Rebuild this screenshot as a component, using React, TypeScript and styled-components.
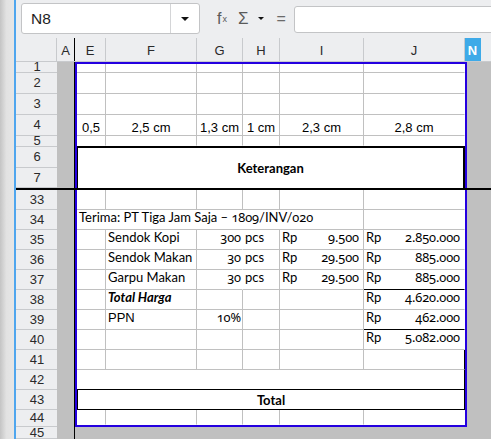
import styled, { createGlobalStyle } from 'styled-components';

const GRID = '#c0c0c0';
const PAGE = '#2400e0';
const CHROME = '#edeef0';
const OUTSIDE = '#c0c0c0';
const HEAD_LINE = '#c8cacd';
const SANS = '"Liberation Sans", Arial, sans-serif';
const CAL = 'Lato, "Open Sans", sans-serif';

const COLS = [29, 91, 46, 37, 84, 101];
const HEADERS = [
  { label: 'E', w: 31 },
  { label: 'F', w: 91 },
  { label: 'G', w: 46 },
  { label: 'H', w: 37 },
  { label: 'I', w: 84 },
  { label: 'J', w: 101 },
];

const TOP_ROWS = [
  { n: 1, h: 11 },
  { n: 2, h: 21 },
  { n: 3, h: 21 },
  { n: 4, h: 21 },
  { n: 5, h: 11 },
  { n: 6, h: 21 },
  { n: 7, h: 20 },
];

// row 45 is only partly on screen, like in the real window
const BOTTOM_ROWS = [
  ...Array.from({ length: 11 }, (_, i) => ({ n: 33 + i, h: 20 })),
  { n: 44, h: 17 },
  { n: 45, h: 12 },
];

const ITEMS = [
  { name: 'Sendok Kopi', qty: '300', price: '9.500', total: '2.850.000' },
  { name: 'Sendok Makan', qty: '30', price: '29.500', total: '885.000' },
  { name: 'Garpu Makan', qty: '30', price: '29.500', total: '885.000' },
];

type Align = 'left' | 'center' | 'right' | 'split';
type Line = 'grid' | 'none' | 'black';

const lineColor = (l: Line) => (l === 'none' ? 'transparent' : l === 'black' ? '#000' : GRID);

const GlobalStyle = createGlobalStyle`
  html, body {
    margin: 0;
    padding: 0;
  }

  body {
    width: 491px;
    height: 439px;
    overflow: hidden;
    background: ${CHROME};
    font-family: ${SANS};
    color: #000;
  }
`;

export default function App() {
  return (
    <>
      <GlobalStyle />
      <Screen>
        <SideEdge />
        <Window>
          <Toolbar>
            <NameBox>
              <NameText>N8</NameText>
              <NameDrop>
                <Caret $size={4} />
              </NameDrop>
            </NameBox>
            <FxIcon>
              f<sub>x</sub>
            </FxIcon>
            <SumIcon>Σ</SumIcon>
            <SmallCaret>
              <Caret $size={3} />
            </SmallCaret>
            <EqIcon>=</EqIcon>
            <FormulaInput />
          </Toolbar>

          <HeaderRow>
            <Corner />
            <ColHead $w={18} $freeze>
              A
            </ColHead>
            {HEADERS.map((c) => (
              <ColHead key={c.label} $w={c.w}>
                {c.label}
              </ColHead>
            ))}
            <ColHead $w={16} $selected>
              N
            </ColHead>
            <HeadFill />
          </HeaderRow>

          <Pane $h={126}>
            <RowHeads>
              {TOP_ROWS.map((r) => (
                <RowHead key={r.n} $h={r.h}>
                  {r.n}
                </RowHead>
              ))}
            </RowHeads>
            <ColA />
            <Canvas>
              <PrintArea $part="top">
                <SheetRow $h={9}>{emptyCells()}</SheetRow>
                <SheetRow $h={21}>{emptyCells()}</SheetRow>
                <SheetRow $h={21}>{emptyCells()}</SheetRow>
                <SheetRow $h={21}>
                  {['0,5', '2,5 cm', '1,3 cm', '1 cm', '2,3 cm', '2,8 cm'].map((t, i) => (
                    <Cell key={i} $align="center" $v="bottom" $last={i === 5}>
                      {t}
                    </Cell>
                  ))}
                </SheetRow>
                <SheetRow $h={10}>{emptyCells('none')}</SheetRow>
                <TitleBand>Keterangan</TitleBand>
              </PrintArea>
            </Canvas>
          </Pane>

          <FreezeLine />

          <Pane>
            <RowHeads>
              {BOTTOM_ROWS.map((r) => (
                <RowHead key={r.n} $h={r.h}>
                  {r.n}
                </RowHead>
              ))}
            </RowHeads>
            <ColA />
            <Canvas>
              <PrintArea $part="bottom">
                <SheetRow $h={20}>{emptyCells()}</SheetRow>

                <SheetRow $h={20}>
                  <Cell $span={5} $font="cal">
                    Terima: PT Tiga Jam Saja –&nbsp;<Num>1809</Num>/INV/<Num>020</Num>
                  </Cell>
                  <Cell $last />
                </SheetRow>

                {ITEMS.map((it, i) => (
                  <SheetRow key={it.name} $h={20}>
                    <Cell />
                    <Cell $font="cal">{it.name}</Cell>
                    <Cell $font="cal" $align="right" $r="none">
                      <Num>{it.qty}</Num>
                    </Cell>
                    <Cell $font="cal">pcs</Cell>
                    <Cell $font="cal" $align="split">
                      <span>Rp</span>
                      <Num>{it.price}</Num>
                    </Cell>
                    <Cell $font="cal" $align="split" $last $b={i === 2 ? 'black' : 'grid'}>
                      <span>Rp</span>
                      <Num>{it.total}</Num>
                    </Cell>
                  </SheetRow>
                ))}

                <SheetRow $h={20}>
                  <Cell />
                  <Cell $font="cal" $bold $italic>
                    Total Harga
                  </Cell>
                  <Cell />
                  <Cell />
                  <Cell />
                  <Cell $font="cal" $align="split" $last>
                    <span>Rp</span>
                    <Num>4.620.000</Num>
                  </Cell>
                </SheetRow>

                <SheetRow $h={20}>
                  <Cell />
                  <Cell>PPN</Cell>
                  <Cell $font="cal" $align="right">
                    <Num>10%</Num>
                  </Cell>
                  <Cell />
                  <Cell />
                  <Cell $font="cal" $align="split" $last $b="black">
                    <span>Rp</span>
                    <Num>462.000</Num>
                  </Cell>
                </SheetRow>

                <SheetRow $h={20}>
                  <Cell />
                  <Cell />
                  <Cell />
                  <Cell />
                  <Cell />
                  <Cell $font="cal" $align="split" $last>
                    <span>Rp</span>
                    <Num>5.082.000</Num>
                  </Cell>
                </SheetRow>

                <SheetRow $h={20}>
                  <Cell />
                  <Cell />
                  <Cell />
                  <Cell />
                  <Cell />
                  <Cell $last $r="black" />
                </SheetRow>

                <SheetRow $h={20}>
                  <Cell $span={6} $last $r="black" $b="black" />
                </SheetRow>

                <SheetRow $h={20}>
                  <TotalBand>Total</TotalBand>
                </SheetRow>

                <SheetRow $h={15}>{emptyCells('none')}</SheetRow>
              </PrintArea>
            </Canvas>
          </Pane>
        </Window>
      </Screen>
    </>
  );
}

function emptyCells(bottom: Line = 'grid') {
  return COLS.map((_, i) => <Cell key={i} $b={bottom} $last={i === COLS.length - 1} />);
}

const Screen = styled.div`
  display: flex;
  width: 491px;
  height: 439px;
  overflow: hidden;
`;

const SideEdge = styled.div`
  flex-shrink: 0;
  width: 14px;
  background: linear-gradient(to right, #c4c4c4, #e2e2e2 45%, #e6e6e6);
  border-right: 2px solid #4fa6ee;
`;

const Window = styled.div`
  flex: 1;
  min-width: 0;
  display: flex;
  flex-direction: column;
  background: ${CHROME};
`;

const Toolbar = styled.div`
  flex-shrink: 0;
  box-sizing: border-box;
  height: 38px;
  padding: 3px 0 0 5px;
  display: flex;
  align-items: flex-start;
  overflow: hidden;
`;

const NameBox = styled.div`
  box-sizing: border-box;
  width: 179px;
  height: 31px;
  display: flex;
  background: #fff;
  border: 1px solid #c3c4c6;
  border-radius: 3px;
`;

const NameText = styled.div`
  flex: 1;
  display: flex;
  align-items: center;
  padding-left: 9px;
  font-size: 15.5px;
  color: #1e1e1e;
`;

const NameDrop = styled.div`
  width: 28px;
  display: flex;
  align-items: center;
  justify-content: center;
  border-left: 1px solid #d4d5d7;
`;

const Caret = styled.span<{ $size: number }>`
  width: 0;
  height: 0;
  border-left: ${({ $size }) => $size}px solid transparent;
  border-right: ${({ $size }) => $size}px solid transparent;
  border-top: ${({ $size }) => $size}px solid #111;
`;

const ToolGlyph = styled.div`
  height: 31px;
  display: flex;
  align-items: center;
  color: #5a5a5a;
`;

const FxIcon = styled(ToolGlyph)`
  margin-left: 17px;
  font-size: 16px;

  sub {
    font-size: 9px;
    vertical-align: -3px;
    margin-left: 1px;
  }
`;

const SumIcon = styled(ToolGlyph)`
  margin-left: 11px;
  font-size: 17px;
`;

const SmallCaret = styled(ToolGlyph)`
  margin-left: 10px;
`;

const EqIcon = styled(ToolGlyph)`
  margin-left: 12px;
  font-size: 16px;
  color: #6a6a6a;
`;

const FormulaInput = styled.div`
  flex: 1;
  box-sizing: border-box;
  height: 27px;
  margin: 3px -10px 0 8px;
  background: #fff;
  border: 1px solid #c3c4c6;
  border-radius: 3px;
`;

const HeaderRow = styled.div`
  flex-shrink: 0;
  box-sizing: border-box;
  height: 24px;
  display: flex;
  border-bottom: 1px solid ${HEAD_LINE};
`;

const Corner = styled.div`
  flex-shrink: 0;
  box-sizing: border-box;
  width: 41px;
  border-right: 1px solid ${HEAD_LINE};
`;

const ColHead = styled.div<{ $w: number; $freeze?: boolean; $selected?: boolean }>`
  flex-shrink: 0;
  box-sizing: border-box;
  width: ${({ $w }) => $w}px;
  display: flex;
  align-items: center;
  justify-content: center;
  padding-top: 1px;
  font-size: 13px;
  color: ${({ $selected }) => ($selected ? '#fff' : '#2a2a2a')};
  font-weight: ${({ $selected }) => ($selected ? 700 : 400)};
  background: ${({ $selected }) => ($selected ? '#3eaae8' : 'transparent')};
  border-right: 1px solid ${({ $freeze, $selected }) => ($freeze ? '#000' : $selected ? '#3eaae8' : HEAD_LINE)};
`;

const HeadFill = styled.div`
  flex: 1;
`;

const Pane = styled.div<{ $h?: number }>`
  display: flex;
  overflow: hidden;
  ${({ $h }) => ($h ? `height: ${$h}px; flex-shrink: 0;` : 'flex: 1; min-height: 0;')}
`;

const RowHeads = styled.div`
  flex-shrink: 0;
  width: 41px;
  display: flex;
  flex-direction: column;
  background: ${CHROME};
`;

const RowHead = styled.div<{ $h: number }>`
  flex-shrink: 0;
  box-sizing: border-box;
  height: ${({ $h }) => $h}px;
  display: flex;
  align-items: center;
  justify-content: center;
  padding-left: 1px;
  font-size: 13px;
  line-height: 10px;
  color: #2a2a2a;
  border-bottom: 1px solid ${HEAD_LINE};
`;

const ColA = styled.div`
  flex-shrink: 0;
  box-sizing: border-box;
  width: 18px;
  background: ${OUTSIDE};
  border-right: 1px solid #000;
`;

const Canvas = styled.div`
  flex: 1;
  min-width: 0;
  display: flex;
  flex-direction: column;
  align-items: flex-start;
  background: ${OUTSIDE};
`;

const PrintArea = styled.div<{ $part: 'top' | 'bottom' }>`
  flex-shrink: 0;
  box-sizing: border-box;
  width: 392px;
  background: #fff;
  border: 2px solid ${PAGE};
  ${({ $part }) => ($part === 'top' ? 'border-bottom: none;' : 'border-top: none;')}
`;

const SheetRow = styled.div<{ $h: number }>`
  display: grid;
  grid-template-columns: ${COLS.map((c) => `${c}px`).join(' ')};
  height: ${({ $h }) => $h}px;
`;

const Cell = styled.div<{
  $span?: number;
  $align?: Align;
  $v?: 'top' | 'bottom' | 'center';
  $r?: Line;
  $b?: Line;
  $last?: boolean;
  $font?: 'sans' | 'cal';
  $bold?: boolean;
  $italic?: boolean;
}>`
  grid-column: span ${({ $span }) => $span ?? 1};
  box-sizing: border-box;
  min-width: 0;
  display: flex;
  white-space: nowrap;
  justify-content: ${({ $align }) =>
    $align === 'center'
      ? 'center'
      : $align === 'right'
        ? 'flex-end'
        : $align === 'split'
          ? 'space-between'
          : 'flex-start'};
  align-items: ${({ $v }) => ($v === 'bottom' ? 'flex-end' : $v === 'center' ? 'center' : 'flex-start')};
  padding: ${({ $align }) =>
    $align === 'split' ? '0 4px 0 2px' : $align === 'right' ? '0 1px 0 2px' : $align === 'center' ? '0' : '0 2px'};
  font-family: ${({ $font }) => ($font === 'cal' ? CAL : SANS)};
  font-size: 13px;
  line-height: 15px;
  font-weight: ${({ $bold }) => ($bold ? 700 : 400)};
  font-style: ${({ $italic }) => ($italic ? 'italic' : 'normal')};
  border-right: 1px solid ${({ $r, $last }) => lineColor($r ?? ($last ? 'none' : 'grid'))};
  border-bottom: 1px solid ${({ $b }) => lineColor($b ?? 'grid')};
`;

// Calibri-style old-style figures
const Num = styled.span`
  font-family: "Noto Sans", Lato, sans-serif;
  font-size: 12.8px;
  font-variant-numeric: oldstyle-nums;
  font-feature-settings: 'onum' 1;
  letter-spacing: -0.1px;
`;

const TitleBand = styled.div`
  box-sizing: border-box;
  height: 42px;
  display: flex;
  align-items: center;
  justify-content: center;
  font-family: ${CAL};
  font-size: 13px;
  font-weight: 700;
  border-top: 2px solid #000;
  border-left: 1px solid #000;
  border-right: 2px solid #000;
`;

const TotalBand = styled.div`
  grid-column: span 6;
  box-sizing: border-box;
  display: flex;
  align-items: center;
  justify-content: center;
  font-family: ${CAL};
  font-size: 13px;
  font-weight: 700;
  border-left: 1px solid #000;
  border-right: 1px solid #000;
  border-bottom: 1px solid #000;
`;

const FreezeLine = styled.div`
  flex-shrink: 0;
  height: 2px;
  background: #000;
`;
